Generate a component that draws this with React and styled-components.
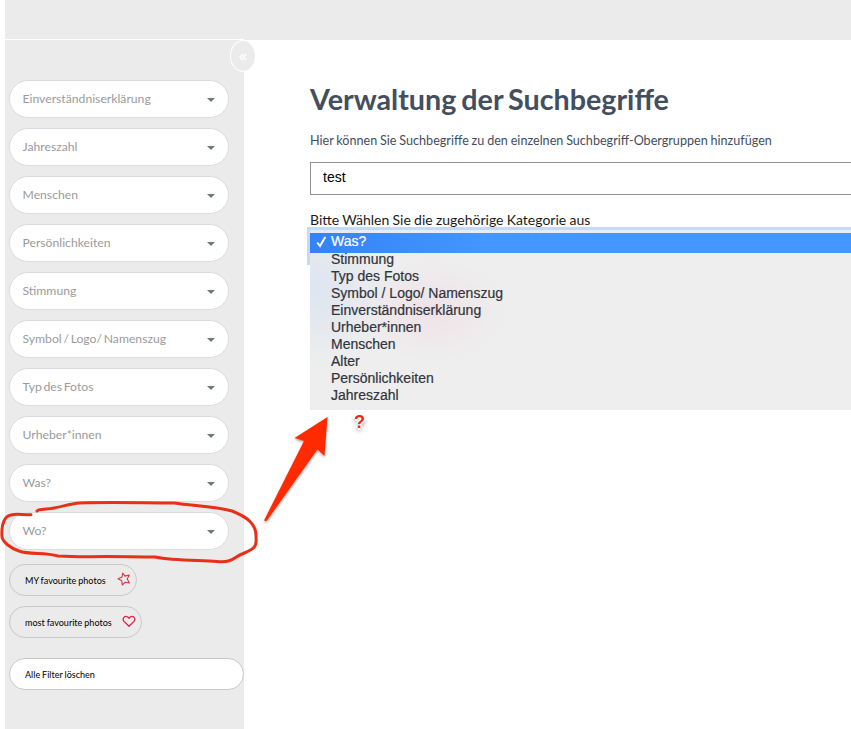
import React from "react";
import styled, { createGlobalStyle } from "styled-components";

const GlobalStyle = createGlobalStyle`
  * { box-sizing: border-box; }
  body { margin: 0; background: #fff; overflow: hidden; font-family: Lato, sans-serif; }
`;

const Page = styled.div`
  position: relative;
  width: 100%;
  height: 729px;
  padding-left: 5px;
  display: flex;
  flex-direction: column;
  overflow: hidden;
`;
const Header = styled.header`
  height: 40px;
  flex: none;
  background: #ebebeb;
  display: flex;
  align-items: flex-end;
`;
const HeaderRule = styled.div`
  width: 239px;
  height: 1px;
  background: #fff;
`;
const Body = styled.div`
  flex: 1;
  display: flex;
  min-height: 0;
`;
const Sidebar = styled.aside`
  position: relative;
  width: 239px;
  flex: none;
  background: #ebebeb;
  padding: 40px 0 0 4px;
`;
const Collapse = styled.button`
  position: absolute;
  left: 225px;
  top: 0;
  width: 26px;
  height: 32px;
  padding: 2px 0 0;
  border: 1px solid #fff;
  border-radius: 50%;
  background: #ebebeb;
  display: flex;
  align-items: center;
  justify-content: center;
`;
const Filters = styled.div`
  display: flex;
  flex-direction: column;
  gap: 10px;
`;
const Filter = styled.div`
  width: 220px;
  height: 38px;
  padding: 0 13px 0 12.5px;
  border: 1px solid #dcdcdc;
  border-radius: 19px;
  background: #fff;
  color: #9b9b9b;
  font-size: 12.2px;
  line-height: 36px;
  word-spacing: -1.4px;
  display: flex;
  align-items: center;
  justify-content: space-between;
`;
const Caret = styled.i`
  margin-top: 1px;
  border: 4px solid transparent;
  border-top-color: #6d7880;
  border-bottom: 0;
`;
const Actions = styled.div`
  margin-top: 14px;
  display: flex;
  flex-direction: column;
  gap: 10px;
`;
const Action = styled.button`
  width: ${(p) => p.$width}px;
  height: 32px;
  margin-top: ${(p) => p.$offset || 0}px;
  padding: 0 5px 0 15px;
  border: 1px solid #c9c9c9;
  border-radius: 16px;
  background: ${(p) => p.$fill || "transparent"};
  color: #000;
  font: 9.05px Lato, sans-serif;
  word-spacing: -0.4px;
  display: flex;
  align-items: center;
  justify-content: space-between;

  svg { margin-top: -2px; }
`;
const Main = styled.main`
  flex: 1;
  min-width: 0;
  padding: 42px 0 0 66px;
`;
const Title = styled.h1`
  margin: 0;
  font-size: 28.7px;
  line-height: 34px;
  font-weight: 700;
  word-spacing: -2px;
  color: #434e5e;
  white-space: nowrap;
`;
const Intro = styled.p`
  margin: 16px 0 0;
  font-size: 12.6px;
  line-height: 18px;
  word-spacing: -0.4px;
  color: #434e5e;
  white-space: nowrap;
`;
const TextInput = styled.input`
  display: block;
  width: 560px;
  height: 33px;
  margin-top: 12px;
  padding: 0 12px 4px;
  border: 1px solid #909090;
  border-radius: 0;
  background: #fff;
  color: #000;
  font: 14px "Liberation Sans", Arial, sans-serif;
  outline: none;
`;
const Label = styled.label`
  display: block;
  height: 32px;
  padding-top: 16px;
  font-size: 14px;
  line-height: 18px;
  word-spacing: -0.3px;
  color: #1b1b1b;
  white-space: nowrap;
`;
const Select = styled.div`
  position: relative;
  width: 560px;
  height: 38px;
  margin-left: -3px;
  border: 3px solid #c5daf5;
`;
const Menu = styled.ul`
  position: absolute;
  left: 0;
  top: 0;
  width: 560px;
  height: 180px;
  margin: 0;
  padding: 3px 0 0;
  list-style: none;
  color: #30343b;
  font: 14px/17px "Liberation Sans", Arial, sans-serif;
  background:
    radial-gradient(ellipse 75px 50px at 120px 80px, #efe2e8, #efe2e800),
    radial-gradient(ellipse 85px 80px at 0px 60px, #dde5f0, #dde5f000),
    linear-gradient(#e5edf6 0, #e5edf6 3px, #eee 3px);
`;
const Option = styled.li`
  height: ${(p) => (p.$selected ? 20 : 17)}px;
  padding-left: ${(p) => (p.$selected ? 6 : 21)}px;
  background: ${(p) => (p.$selected ? "linear-gradient(90deg, #3383f7, #4596ff 180px)" : "none")};
  color: ${(p) => (p.$selected ? "#fff" : "inherit")};
  line-height: ${(p) => (p.$selected ? 17 : 13)}px;
  -webkit-text-stroke: 0.2px currentColor;
  display: flex;
  gap: 4px;
  white-space: nowrap;

  svg { margin-top: 3px; }
`;
const Annotations = styled.svg`
  position: absolute;
  left: 0;
  top: 0;
  pointer-events: none;
`;
const QuestionMark = styled.span`
  position: absolute;
  left: 354px;
  top: 412px;
  font: bold 18px/20px "Liberation Sans", Arial, sans-serif;
  color: #e92b16;
  text-shadow: -2px 0 #fff, 2px 0 #fff, 0 -2px #fff, 0 2px #fff, 0 2px 4px #333;
`;

const filters = [
  "Einverständniserklärung", "Jahreszahl", "Menschen", "Persönlichkeiten", "Stimmung",
  "Symbol / Logo/ Namenszug", "Typ des Fotos", "Urheber*innen", "Was?", "Wo?",
];
const options = [
  "Stimmung", "Typ des Fotos", "Symbol / Logo/ Namenszug", "Einverständniserklärung",
  "Urheber*innen", "Menschen", "Alter", "Persönlichkeiten", "Jahreszahl",
];

const Star = () => (
  <svg width="14" height="14" viewBox="0 0 14 14" fill="none" stroke="#dc3545" strokeWidth="1.1" strokeLinejoin="round">
    <path d="M5.8 1 8 4.1 12.3 3 10.2 7 12.4 11 8.2 10.2 5.3 13 4.7 8.8 1 6.8 5 5Z" />
  </svg>
);
const Heart = () => (
  <svg width="14" height="13" viewBox="0 0 14 13" fill="none" stroke="#dc2545" strokeWidth="1.3" strokeLinejoin="round">
    <path d="M7 11.3 2 6.4C-.3 3.6 2.8.1 5.8 2L7 3.2 8.2 2C11.2.1 14.3 3.6 12 6.4Z" />
  </svg>
);

export default function App() {
  return (
    <>
      <GlobalStyle />
      <Page>
        <Header><HeaderRule /></Header>
        <Body>
          <Sidebar>
            <Collapse aria-label="collapse">
              <svg width="8" height="8" viewBox="0 0 8 8" fill="none" stroke="#fff" strokeWidth="1.3">
                <path d="M4 .7.9 4 4 7.3M7.3.7 4.2 4l3.1 3.3" />
              </svg>
            </Collapse>
            <Filters>
              {filters.map((name) => (
                <Filter key={name}>{name}<Caret /></Filter>
              ))}
            </Filters>
            <Actions>
              <Action $width={128}>MY favourite photos<Star /></Action>
              <Action $width={133}>most favourite photos<Heart /></Action>
              <Action $width={235} $offset={10} $fill="#fff">Alle Filter löschen</Action>
            </Actions>
          </Sidebar>
          <Main>
            <Title>Verwaltung der Suchbegriffe</Title>
            <Intro>Hier können Sie Suchbegriffe zu den einzelnen Suchbegriff-Obergruppen hinzufügen</Intro>
            <TextInput defaultValue="test" />
            <Label>Bitte Wählen Sie die zugehörige Kategorie aus</Label>
            <Select>
              <Menu>
                <Option $selected>
                  <svg width="11" height="12" viewBox="0 0 11 12" fill="none" stroke="#fff" strokeWidth="2">
                    <path d="M1.2 6.5 4 10 9.3 1" />
                  </svg>
                  Was?
                </Option>
                {options.map((o) => <Option key={o}>{o}</Option>)}
              </Menu>
            </Select>
          </Main>
        </Body>
        <Annotations width="851" height="729" viewBox="0 0 851 729">
          <defs>
            <filter id="shadow" x="-20%" y="-20%" width="140%" height="140%">
              <feDropShadow dx="0" dy="1.5" stdDeviation="1.3" floodOpacity=".35" />
            </filter>
          </defs>
          <path d="M327.500 417 294.500 438 304 441 264.500 519.500Q264 522 267 520.5L317.500 449.500 324.500 456Z" fill="#ff2a05" filter="url(#shadow)" />
          <path d="M31 514.700C20 515 9 512 5 519C2 524 1.500 530 2 537C3 542 10 548 19 551C30 555 44 552 58 556C70 556 77 557 90 556.700C112 556 132 557 155 557C175 561 200 560 217 561.500C233 563 234 557 242 554C254 549 257 547 256 538C257 524 247 517 232 511C213 506 193 506 174 503C145 503 110 502 80 503C67 504 60 508 46 509C42 510 39 509 37 511" fill="none" stroke="#e83017" strokeWidth="3" strokeLinecap="round" strokeLinejoin="round" />
        </Annotations>
        <QuestionMark>?</QuestionMark>
      </Page>
    </>
  );
}
